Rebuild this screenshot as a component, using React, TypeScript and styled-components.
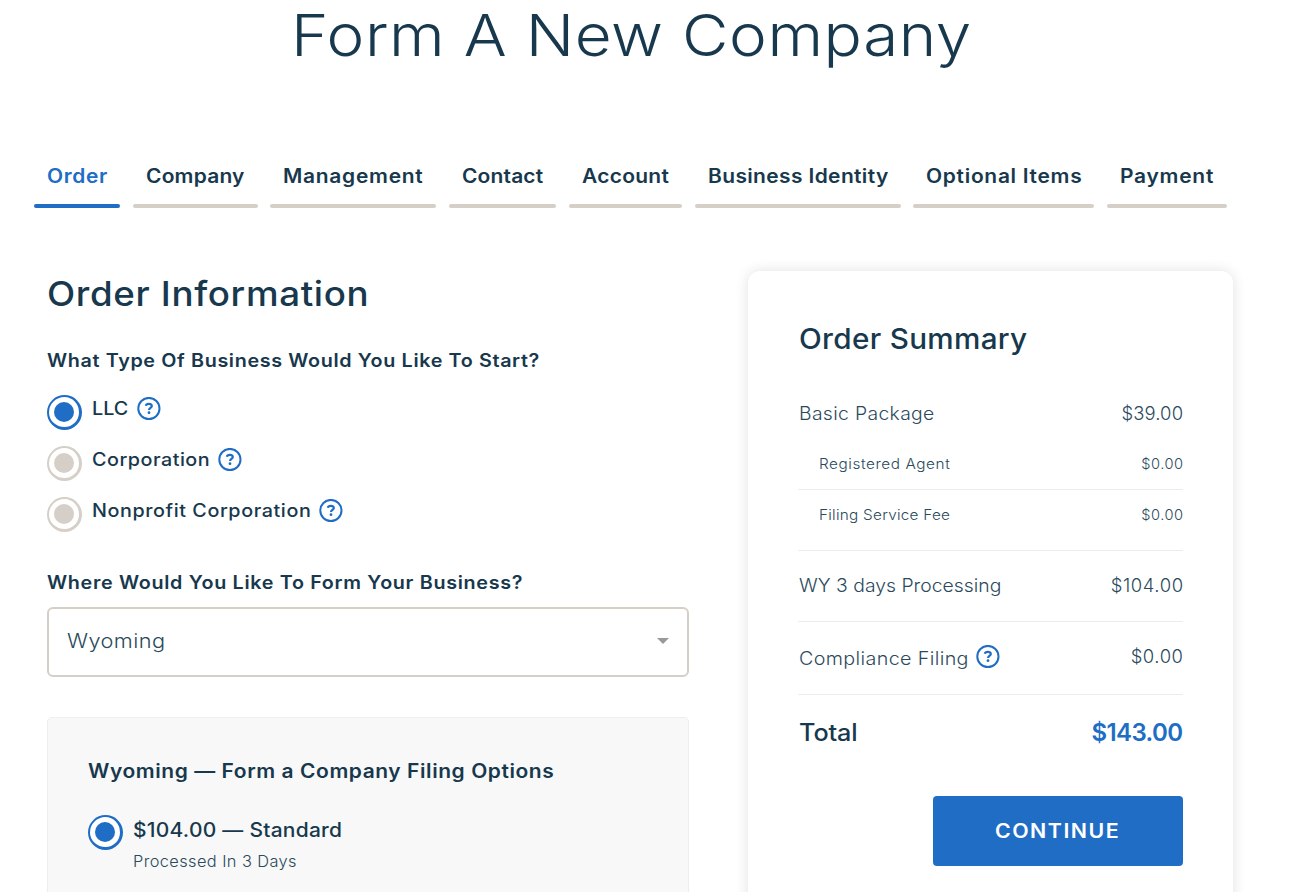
import React from "react";
import styled, { createGlobalStyle, css } from "styled-components";

const color = {
  ink: "#17384d",
  soft: "#2b4a5d",
  blue: "#206dc5",
  sand: "#d6cfc8",
  line: "#ececec",
};

const GlobalStyle = createGlobalStyle`
  *, *::before, *::after { box-sizing: border-box; }
  body {
    margin: 0;
    background: #fff;
    color: ${color.ink};
    font-family: Inter, "Open Sans", sans-serif;
  }
`;

const Extended = styled.span<{ $scale: number; $tracking: number }>`
  display: inline-block;
  letter-spacing: ${(p) => p.$tracking}px;
  white-space: nowrap;
  transform: scaleX(${(p) => p.$scale});
  transform-origin: 0 50%;
`;

/* Reserves the room that extended text takes beside an icon. */
const Slot = styled.span<{ $width: number }>`
  flex: none;
  width: ${(p) => p.$width}px;
`;

const Page = styled.main`
  width: 1302px;
  height: 892px;
  overflow: hidden;
`;

const Title = styled.h1`
  margin: 0;
  padding: 0 0 0 291px;
  height: 70px;
  font-size: 58px;
  line-height: 70px;
  font-weight: 300;
`;

const Tabs = styled.nav`
  display: grid;
  grid-template-columns: 86px 125px 166px 107px 113px 206px 181px 120px;
  column-gap: 12.72px;
  margin: 83px 0 0 34px;
`;

const Tab = styled.a<{ $active?: boolean }>`
  display: block;
  height: 55px;
  padding-left: 13px;
  font-size: 19.4px;
  line-height: 46px;
  font-weight: 600;
  color: ${(p) => (p.$active ? color.blue : color.ink)};

  &::after {
    content: "";
    display: block;
    height: 4px;
    margin: 5px 0 0 -13px;
    border-radius: 2px;
    background: ${(p) => (p.$active ? color.blue : color.sand)};
  }
`;

const TabText = styled(Extended)`
  display: block;
  width: max-content;
`;

const Columns = styled.div`
  display: grid;
  grid-template-columns: 642px 485px;
  column-gap: 59px;
  margin: 63px 0 0 47px;
`;

const Column = styled.section`
  display: flex;
  flex-direction: column;
`;

const SectionTitle = styled.h2`
  margin: 0 0 0 -0.5px;
  font-size: 34px;
  line-height: 46px;
  font-weight: 500;
`;

const Question = styled.h3<{ $top: number }>`
  margin: ${(p) => p.$top}px 0 0;
  height: 23px;
  font-size: 18.3px;
  line-height: 23px;
  font-weight: 600;
`;

const RadioList = styled.div`
  display: flex;
  flex-direction: column;
  gap: 16px;
  margin-top: 23px;
`;

const RadioRow = styled.label`
  display: flex;
  align-items: flex-start;
  gap: 10px;
  height: 35px;
`;

const Radio = styled.span<{ $checked?: boolean }>`
  flex: none;
  width: 35px;
  height: 35px;
  padding: 5px;
  border: solid ${(p) => (p.$checked ? color.blue : color.sand)};
  border-width: 2px 3px 3px 2px;
  border-radius: 50%;
  background: #fff;

  &::before {
    content: "";
    display: block;
    width: 20px;
    height: 20px;
    border-radius: 50%;
    background: ${(p) => (p.$checked ? color.blue : color.sand)};
  }
`;

const RadioLabel = styled.span`
  display: flex;
  align-items: center;
  gap: 6.5px;
  height: 26px;
  font-size: 18.3px;
  font-weight: 500;
`;

const HelpSvg = styled.svg<{ $shift: number }>`
  flex: none;
  display: block;
  width: 24px;
  height: 24px;
  margin-top: ${(p) => p.$shift}px;
  fill: none;
  stroke: ${color.blue};
  stroke-width: 2;
`;

const Select = styled.div`
  display: flex;
  align-items: center;
  justify-content: space-between;
  height: 70px;
  margin-top: 13px;
  padding: 0 18px 2px;
  border: 2px solid ${color.sand};
  border-radius: 6px;
  color: ${color.soft};
  font-size: 19.4px;
  font-weight: 300;
`;

const Caret = styled.span`
  border: 6px solid transparent;
  border-top-color: #999;
  border-bottom: 0;
`;

const OptionPanel = styled.div`
  height: 240px;
  margin-top: 40px;
  padding: 40px;
  border: 1px solid #eeeeee;
  border-radius: 5px;
  background: #f8f8f8;
`;

const PanelTitle = styled.h4`
  margin: 0 0 30px;
  height: 27px;
  font-size: 19.4px;
  line-height: 27px;
  font-weight: 600;
`;

const OptionText = styled.div`
  display: flex;
  flex-direction: column;
`;

const OptionPrice = styled.span`
  height: 30px;
  font-size: 19.4px;
  line-height: 30px;
  font-weight: 500;
`;

const OptionNote = styled.span`
  color: ${color.soft};
  font-size: 15.3px;
  line-height: 33px;
  font-weight: 300;
`;

const Card = styled.aside`
  height: 700px;
  padding: 48px 50px 0;
  border-radius: 12px;
  background: #fff;
  box-shadow: 0 0 14px rgba(0, 0, 0, 0.12);
`;

const CardTitle = styled.h2`
  margin: 0 0 29px 0.5px;
  height: 40px;
  font-size: 28px;
  line-height: 40px;
  font-weight: 500;
`;

type RowKind = "item" | "sub" | "total";

const rowText = {
  item: css`
    color: ${color.soft};
    font-size: 18.4px;
    font-weight: 300;
  `,
  sub: css`
    padding-left: 20px;
    color: ${color.soft};
    font-size: 14.6px;
    font-weight: 300;
  `,
  total: css`
    font-size: 24px;
    font-weight: 500;
  `,
};

const SummaryRow = styled.div<{
  $kind: RowKind;
  $height: number;
  $ruled?: boolean;
  $bottom?: number;
}>`
  display: flex;
  align-items: center;
  justify-content: space-between;
  height: ${(p) => p.$height}px;
  padding-bottom: ${(p) => p.$bottom ?? 0}px;
  border-bottom: ${(p) => (p.$ruled ? `1px solid ${color.line}` : "0")};
  white-space: nowrap;
  ${(p) => rowText[p.$kind]}
`;

const ItemName = styled.span`
  display: flex;
  align-items: center;
  gap: 7px;
  padding-left: 0.5px;
`;

const Amount = styled.span<{ $tracking: number; $accent?: boolean }>`
  letter-spacing: ${(p) => p.$tracking}px;
  margin-right: ${(p) => -p.$tracking}px;
  color: ${(p) => (p.$accent ? color.blue : "inherit")};
  font-weight: ${(p) => (p.$accent ? 600 : "inherit")};
`;

const RaisedAmount = styled(Amount)`
  padding-bottom: 4px;
`;

const ContinueButton = styled.button`
  display: block;
  width: 250px;
  height: 70px;
  margin: 26px 0 0 auto;
  padding: 0 0 0 62px;
  border: 0;
  border-radius: 4px;
  background: ${color.blue};
  color: #fff;
  text-align: left;
  font: 600 19.4px/70px Inter, "Open Sans", sans-serif;
`;

const Help = ({ shift = 2 }: { shift?: number }) => (
  <HelpSvg $shift={shift} viewBox="0 0 24 24" aria-hidden="true">
    <circle cx="11.9" cy="11.5" r="10.6" />
    <path strokeWidth="2.2" d="M8.8 8.8C9.1 7.5 10.2 6.8 11.8 6.8c1.9 0 3 .9 3 2.2 0 1.9-2.8 2-2.8 4" />
    <circle cx="12" cy="15.7" r="1.4" fill={color.blue} stroke="none" />
  </HelpSvg>
);

const tabs: [string, number][] = [
  ["Order", 0.6],
  ["Company", 0.2],
  ["Management", 0.68],
  ["Contact", 0.15],
  ["Account", 0.27],
  ["Business Identity", 0.35],
  ["Optional Items", 0.66],
  ["Payment", 0.7],
];

const businessTypes: [string, number, number][] = [
  ["LLC", 0, 38],
  ["Corporation", 0.46, 119.5],
  ["Nonprofit Corporation", 0.53, 220.5],
];

export default function App() {
  return (
    <Page>
      <GlobalStyle />
      <Title>
        <Extended $scale={1.1} $tracking={0.49}>Form A New Company</Extended>
      </Title>
      <Tabs>
        {tabs.map(([name, tracking], i) => (
          <Tab key={name} $active={i === 0}>
            <TabText $scale={1.08} $tracking={tracking}>{name}</TabText>
          </Tab>
        ))}
      </Tabs>
      <Columns>
        <Column>
          <SectionTitle>
            <Extended $scale={1.08} $tracking={0.6}>Order Information</Extended>
          </SectionTitle>
          <Question $top={32}>
            <Extended $scale={1.08} $tracking={0.59}>
              What Type Of Business Would You Like To Start?
            </Extended>
          </Question>
          <RadioList>
            {businessTypes.map(([name, tracking, width], i) => (
              <RadioRow key={name}>
                <Radio $checked={i === 0} />
                <RadioLabel>
                  <Slot $width={width}>
                    <Extended $scale={1.08} $tracking={tracking}>{name}</Extended>
                  </Slot>
                  <Help />
                </RadioLabel>
              </RadioRow>
            ))}
          </RadioList>
          <Question $top={39}>
            <Extended $scale={1.08} $tracking={0.62}>
              Where Would You Like To Form Your Business?
            </Extended>
          </Question>
          <Select>
            <Extended $scale={1.12} $tracking={0.4}>Wyoming</Extended>
            <Caret />
          </Select>
          <OptionPanel>
            <PanelTitle>
              <Extended $scale={1.08} $tracking={0.54}>
                Wyoming — Form a Company Filing Options
              </Extended>
            </PanelTitle>
            <RadioRow>
              <Radio $checked />
              <OptionText>
                <OptionPrice>
                  <Extended $scale={1.08} $tracking={0.25}>$104.00 — Standard</Extended>
                </OptionPrice>
                <OptionNote>
                  <Extended $scale={1.07} $tracking={0.38}>Processed In 3 Days</Extended>
                </OptionNote>
              </OptionText>
            </RadioRow>
          </OptionPanel>
        </Column>
        <Card>
          <CardTitle>
            <Extended $scale={1.06} $tracking={0.29}>Order Summary</Extended>
          </CardTitle>
          <SummaryRow $kind="item" $height={51} $bottom={1}>
            <ItemName>
              <Extended $scale={1.05} $tracking={0.34}>Basic Package</Extended>
            </ItemName>
            <Amount $tracking={0.15}>$39.00</Amount>
          </SummaryRow>
          <SummaryRow $kind="sub" $height={51} $ruled>
            <ItemName>
              <Extended $scale={1.05} $tracking={0.55}>Registered Agent</Extended>
            </ItemName>
            <Amount $tracking={0.5}>$0.00</Amount>
          </SummaryRow>
          <SummaryRow $kind="sub" $height={61} $bottom={10} $ruled>
            <ItemName>
              <Extended $scale={1.05} $tracking={0.24}>Filing Service Fee</Extended>
            </ItemName>
            <Amount $tracking={0.5}>$0.00</Amount>
          </SummaryRow>
          <SummaryRow $kind="item" $height={71} $bottom={2} $ruled>
            <ItemName>
              <Extended $scale={1.05} $tracking={0.03}>WY 3 days Processing</Extended>
            </ItemName>
            <Amount $tracking={0.6}>$104.00</Amount>
          </SummaryRow>
          <SummaryRow $kind="item" $height={73} $ruled>
            <ItemName>
              <Slot $width={170.5}>
                <Extended $scale={1.07} $tracking={0.36}>Compliance Filing</Extended>
              </Slot>
              <Help shift={-3} />
            </ItemName>
            <RaisedAmount $tracking={0.6}>$0.00</RaisedAmount>
          </SummaryRow>
          <SummaryRow $kind="total" $height={75}>
            <ItemName>
              <Extended $scale={1.05} $tracking={-0.1}>Total</Extended>
            </ItemName>
            <Amount $tracking={-0.6} $accent>
              $143.00
            </Amount>
          </SummaryRow>
          <ContinueButton>
            <Extended $scale={1.1} $tracking={1.37}>CONTINUE</Extended>
          </ContinueButton>
        </Card>
      </Columns>
    </Page>
  );
}
